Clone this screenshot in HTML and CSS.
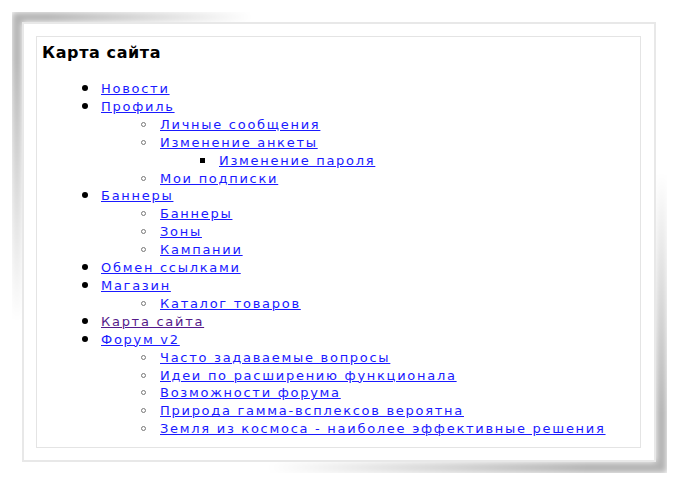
FILE: index.html
```html
<!DOCTYPE html>
<html>
<head>
<meta charset="utf-8">
<link rel="stylesheet" href="styles.css">
</head>
<body>
<div class="paper">
  <div class="box">
    <h1 class="title">Карта сайта</h1>
    <ul class="lvl1">
      <li><a href="#">Новости</a></li>
      <li><a href="#">Профиль</a>
        <ul class="lvl2">
          <li><a href="#">Личные сообщения</a></li>
          <li><a href="#">Изменение анкеты</a>
            <ul class="lvl3">
              <li><a href="#">Изменение пароля</a></li>
            </ul>
          </li>
          <li><a href="#">Мои подписки</a></li>
        </ul>
      </li>
      <li><a href="#">Баннеры</a>
        <ul class="lvl2">
          <li><a href="#">Баннеры</a></li>
          <li><a href="#">Зоны</a></li>
          <li><a href="#">Кампании</a></li>
        </ul>
      </li>
      <li><a href="#">Обмен ссылками</a></li>
      <li><a href="#">Магазин</a>
        <ul class="lvl2">
          <li><a href="#">Каталог товаров</a></li>
        </ul>
      </li>
      <li><a href="#" class="visited">Карта сайта</a></li>
      <li><a href="#">Форум v2</a>
        <ul class="lvl2">
          <li><a href="#">Часто задаваемые вопросы</a></li>
          <li><a href="#">Идеи по расширению функционала</a></li>
          <li><a href="#">Возможности форума</a></li>
          <li><a href="#">Природа гамма-всплексов вероятна</a></li>
          <li><a href="#">Земля из космоса - наиболее эффективные решения</a></li>
        </ul>
      </li>
    </ul>
  </div>
</div>
</body>
</html>
```

FILE: styles.css
```css
html, body {
  margin: 0;
  padding: 0;
}
body {
  width: 674px;
  height: 482px;
  overflow: hidden;
  font-family: "DejaVu Sans", Verdana, sans-serif;
}
.paper {
  position: relative;
  margin: 22px 0 0 22px;
  width: 606px;
  height: 412px;
  border: 2px solid #e8e8e8;
  background: #fff;
  padding: 12px;
  box-sizing: content-box;
}
.paper::before {
  content: "";
  position: absolute;
  left: -12px;
  top: -12px;
  width: 300px;
  height: 330px;
  border-top: 10px solid rgba(0,0,0,0.30);
  border-left: 10px solid rgba(0,0,0,0.30);
  filter: blur(3px);
  -webkit-mask-image: radial-gradient(ellipse 240px 310px at 0 0, #000 15%, transparent 100%);
  mask-image: radial-gradient(ellipse 240px 310px at 0 0, #000 15%, transparent 100%);
  z-index: -1;
}
.paper::after {
  content: "";
  position: absolute;
  right: -13px;
  bottom: -13px;
  width: 420px;
  height: 320px;
  border-right: 11px solid rgba(0,0,0,0.30);
  border-bottom: 11px solid rgba(0,0,0,0.30);
  filter: blur(3px);
  -webkit-mask-image: radial-gradient(ellipse 400px 300px at 100% 100%, #000 20%, transparent 100%);
  mask-image: radial-gradient(ellipse 400px 300px at 100% 100%, #000 20%, transparent 100%);
  z-index: -1;
}
.box {
  width: 598px;
  height: 410px;
  border: 1px solid #e4e4e4;
  box-sizing: content-box;
  padding: 0 0 0 5px;
}
.title {
  margin: 6px 0 0 0;
  font-size: 16px;
  font-weight: bold;
  line-height: 20px;
  color: #000;
  letter-spacing: 0.6px;
}
ul {
  margin: 0;
  padding: 0;
  list-style: none;
}
.lvl1 {
  margin-top: 17px;
  padding-left: 59px;
}
.lvl2, .lvl3 {
  padding-left: 59px;
}
li {
  font-size: 13px;
  line-height: 17.9px;
  letter-spacing: 1.72px;
}
li::before {
  content: "";
  display: inline-block;
  box-sizing: border-box;
  width: 5px;
  height: 5px;
  margin-left: -19px;
  margin-right: 14px;
  vertical-align: 2px;
}
.lvl1 > li::before {
  border-radius: 50%;
  background: #000;
  width: 6px;
  height: 6px;
  margin-right: 13px;
}
.lvl2 > li::before {
  border-radius: 50%;
  border: 1.5px solid #777;
  background: #fff;
}
.lvl3 > li::before {
  background: #000;
}
a {
  color: #1a1aff;
  text-decoration: underline;
}
a.visited {
  color: #551a8b;
}
```
